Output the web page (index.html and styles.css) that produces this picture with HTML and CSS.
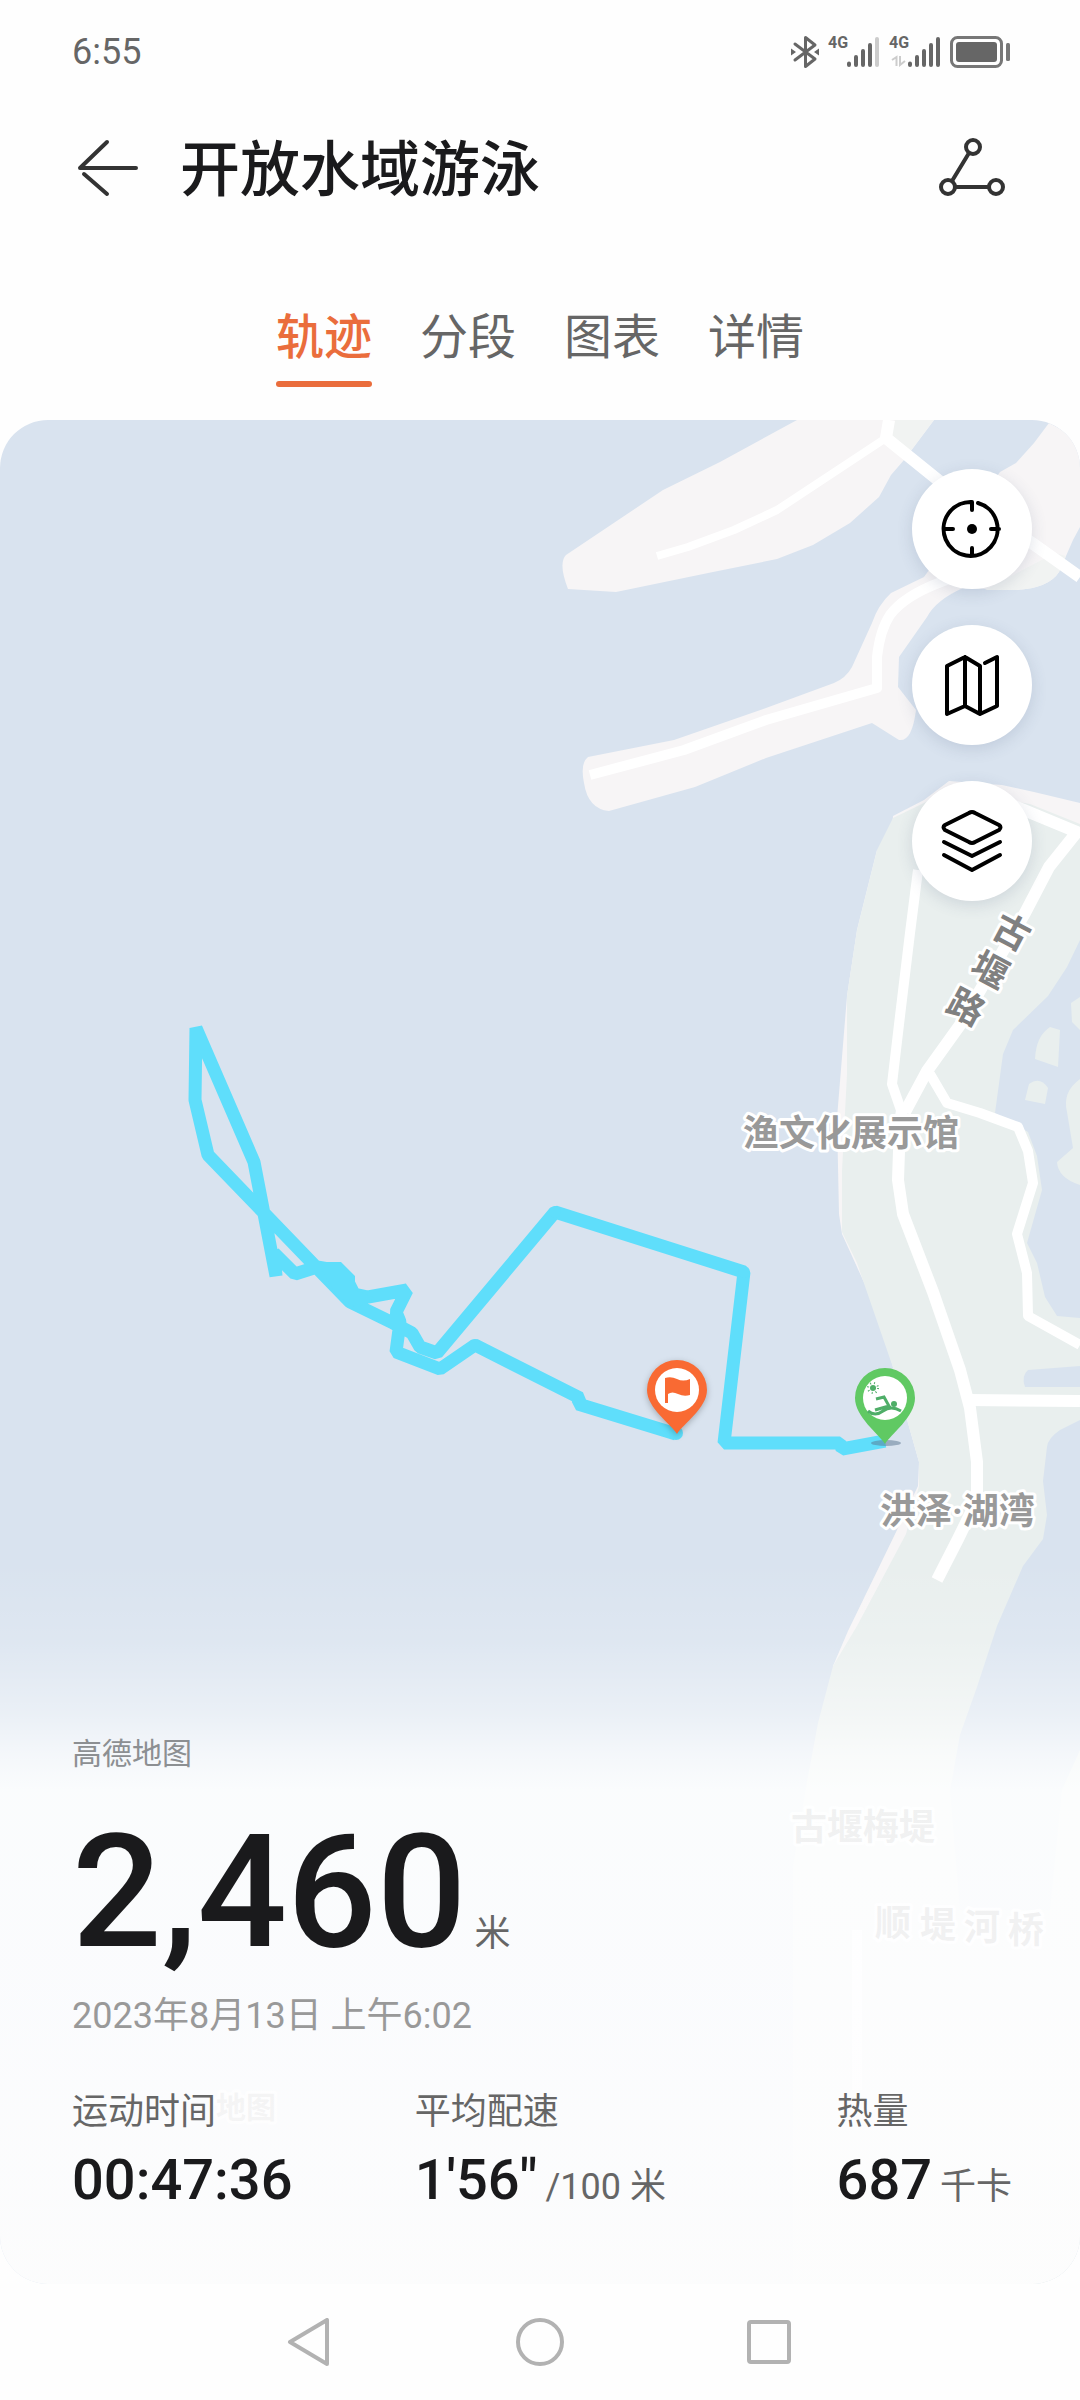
FILE: index.html
```html
<!DOCTYPE html>
<html lang="zh-CN">
<head>
  <meta charset="UTF-8">
  <meta name="viewport" content="width=device-width, initial-scale=1.0">
  <title>开放水域游泳</title>
  <link rel="stylesheet" href="styles.css">
</head>
<body>
  <div class="status-bar">
    <span class="clock">6:55</span>
    <div class="status-icons">
      <svg class="icon-bt" viewBox="0 0 28 34" width="28" height="34">
        <path d="M4 9 24 24 14.500 31.500V2.500L24 10 4 25" fill="none" stroke="#666" stroke-width="3" stroke-linejoin="round" stroke-linecap="round"/>
        <path d="M0 13.500 5 17 0 20.500zM28 13.500 23 17 28 20.500z" fill="#666"/>
      </svg>
      <div class="signal">
        <span class="net">4G</span>
        <svg viewBox="0 0 34 34" width="34" height="34" stroke="#666" stroke-width="4" stroke-linecap="round">
          <path d="M3 28.500V30M10 22v8M17 16v14M24 10v20"/>
          <path d="M31 4v26" stroke="#ccc"/>
        </svg>
      </div>
      <div class="signal">
        <span class="net">4G</span>
        <svg class="data-arrows" viewBox="0 0 15 12" width="15" height="12">
          <path d="M5.500 11V2L1 5M9 1v9l5-4" fill="none" stroke="#ccc" stroke-width="2"/>
        </svg>
        <svg viewBox="0 0 34 34" width="34" height="34" stroke="#666" stroke-width="4" stroke-linecap="round">
          <path d="M3 28.500V30M10 22v8M17 16v14M24 10v20M31 4v26"/>
        </svg>
      </div>
      <svg class="icon-battery" viewBox="0 0 60 32" width="60" height="32">
        <rect x="1.500" y="1.500" width="50" height="29" rx="6" fill="none" stroke="#777" stroke-width="3"/>
        <rect x="6" y="6" width="41" height="20" rx="3" fill="#666"/>
        <rect x="56" y="7" width="4" height="18" rx="1.500" fill="#777"/>
      </svg>
    </div>
  </div>

  <header class="title-bar">
    <button class="icon-btn" type="button" aria-label="返回">
      <svg viewBox="0 0 64 64" width="64" height="64" fill="none" stroke="#333" stroke-width="4" stroke-linecap="round" stroke-linejoin="round">
        <path d="M60 32H4L31 6M8 38l23 20"/>
      </svg>
    </button>
    <h1>开放水域游泳</h1>
    <button class="icon-btn" type="button" aria-label="轨迹分享">
      <svg viewBox="0 0 72 64" width="72" height="64" fill="none" stroke="#333" stroke-width="4">
        <circle cx="37" cy="11" r="7"/>
        <circle cx="12" cy="51" r="7"/>
        <circle cx="60" cy="51" r="7"/>
        <path d="M33 17 16 45M19 51h34"/>
      </svg>
    </button>
  </header>

  <nav class="tabs" role="tablist">
    <button class="tab active" type="button" role="tab" aria-selected="true">轨迹</button>
    <button class="tab" type="button" role="tab" aria-selected="false">分段</button>
    <button class="tab" type="button" role="tab" aria-selected="false">图表</button>
    <button class="tab" type="button" role="tab" aria-selected="false">详情</button>
  </nav>

  <main class="map-card">
    <svg class="map" viewBox="0 420 1080 1864" preserveAspectRatio="xMidYMin slice">
      <rect x="0" y="420" width="1080" height="1864" fill="#d9e3ef"/>

      <!-- land -->
      <g fill="#f7f5f6">
        <path d="M797 420 720 462 663 490 566 555Q558 563 568 589L616 592 713 572 777 559 813 545 850 523 879 497 891 475 904 460 934 420z"/>
        <path d="M1049 423 1034 443 1016 463 1000 472 924 577 891 593Q878 605 872 623L852 667Q846 678 834 683L766 708 674 740 588 757Q580 763 584 783 588 809 609 811L695 787 766 758 872 723 899 740Q912 742 916 710L898 687 899 657 927 617Q936 600 963 588L1016 590Q1049 588 1059 572L1073 540 1080 527V450L1066 432z"/>
        <path d="M893 816 924 800 949 781 1002 785 1034 792 1080 803V860H890z"/>
        <path d="M877 850 857 930 847 996 837 1118 839 1214 842 1234 877 1311 893 1367 908 1423 919 1462 918 1486 897 1530 848 1631 833 1666 860 1666 930 1520V900z"/>
      </g>
      <path d="M895 420H934L904 460 890 447zM985 590 1055 553 1066 556 1059 572Q1049 588 1016 590z" fill="#f1f3f2"/>
      <path d="M893 818 926 802 955 790 1030 804 1080 824V2284H793V1867L807 1782 818 1723 833 1666 857 1626 906 1534 919 1486V1462L908 1423 897 1379 857 1263 842 1232V1171L847 1074V996L857 930 877 850z" fill="#e9efee"/>

      <!-- ponds behind the shore -->
      <g fill="#d9e3ef">
        <path d="M1080 940 1067 967 1048 996 1013 1030 1003 1054 995 1113 1028 1132 1037 1156 1042 1190 1027 1243 1037 1263 1045 1297 1057 1316 1080 1318z"/>
        <path d="M1028 1370 1080 1366V1387H1025Q1021 1376 1028 1370z"/>
        <path d="M1080 1420 1060 1430Q1048 1438 1047 1447L1043 1481 1047 1515 1043 1539 1023 1566 997 1626 977 1687 960 1735 950 1791 960 1910H1050L1062 1790 1080 1750z"/>
      </g>
      <g fill="#e9efee">
        <path d="M1035 1059Q1036 1036 1050 1027L1060 1030 1058 1067z"/>
        <path d="M1025 1100 1029 1084Q1040 1076 1048 1088L1045 1104z"/>
        <path d="M1080 997 1071 1003 1072 1022 1080 1030z"/>
        <path d="M1080 1079Q1062 1092 1067 1112L1073 1148 1057 1162Q1058 1178 1080 1185z"/>
      </g>

      <!-- roads -->
      <g fill="none" stroke="#fff" stroke-width="10" stroke-linejoin="round">
        <path d="M657 556 688 547 734 530 777 510 827 477 886 438" stroke-width="8"/>
        <path d="M889 420 886 438 938 480 1032 543 1080 577" stroke-width="12"/>
        <path d="M590 775 684 750 766 720 877 688V657Q880 630 890 615 904 596 941 582L972 570"/>
        <path d="M918 870 910 933 900 1016 892 1084 902 1113"/>
        <path d="M1000 800 1077 832 1049 867 1025 913 960 1025 927 1071 905 1112" stroke-width="12"/>
        <path d="M903 1105 900 1122 898 1180 903 1214 933 1292 960 1370 970 1408 977 1462V1500L958 1539 937 1580" stroke-width="12"/>
        <path d="M930 1074 947 1103 980 1113 1018 1127 1028 1151 1033 1183 1017 1234 1027 1273 1028 1316 1080 1345"/>
        <path d="M968 1400 1080 1401" stroke-width="12"/>
        <path d="M857 1930V2090"/>
      </g>

      <!-- place names -->
      <g class="place">
        <text x="743" y="1146">渔文化展示馆</text>
        <text x="880" y="1524">洪泽·湖湾</text>
        <g class="street">
          <text transform="translate(1012 932) rotate(28)" y="13">古</text>
          <text transform="translate(990 970) rotate(28)" y="13">堰</text>
          <text transform="translate(966 1007) rotate(28)" y="13">路</text>
        </g>
      </g>
      <g class="place covered">
        <text x="791" y="1840">古堰梅堤</text>
        <text x="875 920 964 1008" y="1936 1938 1940 1943">顺堤河桥</text>
        <text class="provider" x="216" y="2118">地图</text>
      </g>

      <!-- swim track -->
      <path d="M885 1441 842 1449 840 1443H724L744 1272 555 1212 437 1353 420 1347 412 1333 393 1323 350 1302 317 1268 208 1155 195 1100 196 1028 254 1162 276 1276 274 1253 295 1274 317 1267 340 1271 348 1282 354 1294 368 1297 407 1290 396 1312 400 1322 396 1352 440 1369 475 1345 580 1398 578 1404 676 1434" fill="none" stroke="#5fdefb" stroke-width="13" stroke-linejoin="bevel"/>
      <g fill="#5fdefb">
        <circle cx="744" cy="1272" r="6"/>
        <circle cx="555" cy="1212" r="6"/>
        <circle cx="475" cy="1345" r="6"/>
        <circle cx="676" cy="1433" r="7"/>
        <path d="M317 1262h24l14 14v14l20 8-18 10-20-12z"/>
      </g>

      <!-- finish -->
      <g class="pin" transform="translate(677 1390)">
        <path d="M0 44C-6 34-30 18-30 0A30 30 0 0 1 30 0C30 18 6 34 0 44z" fill="#f96a33"/>
        <circle r="22" fill="#fff"/>
        <path d="M-12-12Q-6-14 0-11T13-11V5Q7 7 1 4T-9 4V13H-12z" fill="#f96a33"/>
      </g>
      <!-- start -->
      <ellipse cx="886" cy="1443" rx="15" ry="3" fill="#5a7690" opacity=".5"/>
      <g transform="translate(885 1398)">
        <path d="M0 46C-6 36-30 19-30 0A30 30 0 0 1 30 0C30 19 6 36 0 46z" fill="#60c963"/>
        <circle r="22" fill="#fff"/>
        <circle cx="-12" cy="-10" r="3" fill="#4fae68"/>
        <circle cx="-12" cy="-10" r="5" fill="none" stroke="#4fae68" stroke-width="2" stroke-dasharray="1 3"/>
        <circle cx="9" cy="6" r="3" fill="#4fae68"/>
        <path d="M-9 1-1-1 4 8-10 12M-17 13Q-10 19-2 13T16 13" fill="none" stroke="#4fae68" stroke-width="3"/>
      </g>
    </svg>

    <div class="map-tools">
      <button class="round-btn" type="button" aria-label="定位">
        <svg viewBox="0 0 64 64" width="64" height="64">
          <path d="M38 6A27 27 0 1 1 32 5V13M5 32h8M59 32h-8M32 59v-8"/>
          <circle class="dot" cx="32" cy="32" r="5"/>
        </svg>
      </button>
      <button class="round-btn" type="button" aria-label="地图">
        <svg viewBox="0 0 64 64" width="64" height="64">
          <path d="M45 10 57 4V53L40 61 25 53 7 61V13L25 4 40 13V61M25 4V53"/>
        </svg>
      </button>
      <button class="round-btn" type="button" aria-label="图层">
        <svg viewBox="0 0 64 64" width="64" height="64">
          <path d="M29 4Q32 2 35 4L59 16Q62 18 59 21L35 33Q32 35 29 33L5 21Q2 18 5 16z"/>
          <path d="M4 33 32 47 60 33M4 46 32 61 60 46"/>
        </svg>
      </button>
    </div>

    <section class="summary">
      <p class="source">高德地图</p>
      <p class="distance"><strong>2,460</strong><span class="unit">米</span></p>
      <p class="date">2023年8月13日 上午6:02</p>
      <dl class="stats">
        <div class="stat">
          <dt>运动时间</dt>
          <dd>00:47:36</dd>
        </div>
        <div class="stat">
          <dt>平均配速</dt>
          <dd>1'56"<span class="unit">/100 米</span></dd>
        </div>
        <div class="stat">
          <dt>热量</dt>
          <dd>687<span class="unit">千卡</span></dd>
        </div>
      </dl>
    </section>
  </main>

  <nav class="system-nav">
    <button type="button" aria-label="系统返回">
      <svg viewBox="0 0 48 48" width="48" height="48"><path d="M41 2V46L4 24z"/></svg>
    </button>
    <button type="button" aria-label="主屏幕">
      <svg viewBox="0 0 48 48" width="48" height="48"><circle cx="24" cy="24" r="22"/></svg>
    </button>
    <button type="button" aria-label="最近任务">
      <svg viewBox="0 0 48 48" width="48" height="48"><rect x="3" y="4" width="40" height="40" rx="2"/></svg>
    </button>
  </nav>
</body>
</html>
```

FILE: styles.css
```css
* {
  box-sizing: border-box;
}
body {
  margin: 0;
  min-height: 100vh;
  display: flex;
  flex-direction: column;
  background: #fefefe;
  color: #1a1a1c;
  font-family: Roboto, "Noto Sans CJK SC", sans-serif;
  font-size: 36px;
}
h1, p, dl, dd {
  margin: 0;
}
button {
  padding: 0;
  border: 0;
  background: none;
  font: inherit;
  color: inherit;
  cursor: pointer;
}
svg {
  display: block;
}

/* status bar */
.status-bar {
  display: flex;
  align-items: center;
  justify-content: space-between;
  height: 104px;
  padding: 0 70px 0 72px;
  color: #666;
}
.status-icons {
  display: flex;
  align-items: center;
  gap: 9px;
}
.signal {
  position: relative;
  display: flex;
  padding-left: 18px;
}
.net {
  position: absolute;
  top: 0;
  left: 0;
  font-size: 16px;
  line-height: 16px;
  font-weight: bold;
}
.data-arrows {
  position: absolute;
  left: 2px;
  bottom: 2px;
}

/* title */
.title-bar {
  display: flex;
  align-items: center;
  height: 128px;
  padding: 0 72px 0 76px;
}
.title-bar h1 {
  flex: 1;
  margin-left: 40px;
  padding-top: 5px;
  font-size: 60px;
  line-height: 72px;
  font-weight: 500;
}

/* tabs */
.tabs {
  display: flex;
  justify-content: center;
  gap: 48px;
  padding: 75px 0 33px;
}
.tab {
  position: relative;
  padding-bottom: 18px;
  font-size: 48px;
  line-height: 62px;
  color: #666;
}
.tab.active {
  color: #ea6d3c;
  font-weight: 500;
}
.tab.active::after {
  content: "";
  position: absolute;
  left: 0;
  right: 0;
  bottom: 0;
  height: 6px;
  border-radius: 3px;
  background: #ea6d3c;
}

/* map */
.map-card {
  position: relative;
  flex: 1;
  display: flex;
  flex-direction: column;
  justify-content: space-between;
  overflow: hidden;
  border-radius: 48px;
}
.map {
  position: absolute;
  top: 0;
  left: 0;
  width: 100%;
  height: 100%;
}
.place {
  font-size: 36px;
  font-weight: 700;
  fill: #999;
  stroke: #fff;
  stroke-width: 6px;
  stroke-linejoin: round;
  paint-order: stroke;
}
.street {
  fill: #808080;
  text-anchor: middle;
}
.covered {
  fill: #777;
}
.provider {
  font-size: 30px;
}
.pin {
  filter: drop-shadow(0 2px 3px rgba(0, 0, 0, 0.25));
}
.map-tools {
  position: relative;
  align-self: flex-end;
  display: flex;
  flex-direction: column;
  gap: 36px;
  padding: 49px 48px;
}
.round-btn {
  display: flex;
  align-items: center;
  justify-content: center;
  width: 120px;
  height: 120px;
  border-radius: 50%;
  background: #fff;
  box-shadow: 0 4px 16px rgba(60, 80, 120, 0.16);
}
.round-btn svg {
  fill: none;
  stroke: #000;
  stroke-width: 4px;
  stroke-linecap: round;
  stroke-linejoin: round;
}
.round-btn .dot {
  fill: #000;
  stroke: none;
}

/* summary, fades the map out behind the text */
.summary {
  position: relative;
  padding: 172px 72px 65px;
  background: linear-gradient(
    rgba(255, 255, 255, 0) 0,
    rgba(255, 255, 255, 0.15) 80px,
    rgba(255, 255, 255, 0.45) 150px,
    rgba(255, 255, 255, 0.7) 190px,
    rgba(254, 255, 255, 0.9) 230px,
    rgba(254, 254, 255, 0.9) 400px,
    rgba(253, 253, 253, 0.97) 100%
  );
}
.source {
  font-size: 30px;
  line-height: 40px;
  color: #8c8f92;
}
.distance {
  display: flex;
  align-items: baseline;
  gap: 8px;
  margin-top: 38px;
}
.distance strong {
  font-size: 158px;
  line-height: 160px;
  font-weight: 500;
}
.unit {
  font-size: 36px;
  font-weight: 400;
  color: #666;
}
.date {
  margin-top: 20px;
  line-height: 48px;
  color: #999;
}
.stats {
  display: grid;
  grid-template-columns: 26fr 32fr 13fr;
  margin-top: 48px;
}
.stat {
  min-width: 0;
  white-space: nowrap;
}
.stat dt {
  line-height: 48px;
  color: #666;
}
.stat dd {
  display: flex;
  align-items: baseline;
  gap: 8px;
  margin-top: 12px;
  font-size: 56px;
  line-height: 64px;
  font-weight: 500;
}

/* android buttons */
.system-nav {
  display: flex;
  align-items: center;
  justify-content: center;
  gap: 182px;
  height: 116px;
}
.system-nav svg {
  fill: none;
  stroke: #b2b2b2;
  stroke-width: 4px;
  stroke-linejoin: round;
}
```
